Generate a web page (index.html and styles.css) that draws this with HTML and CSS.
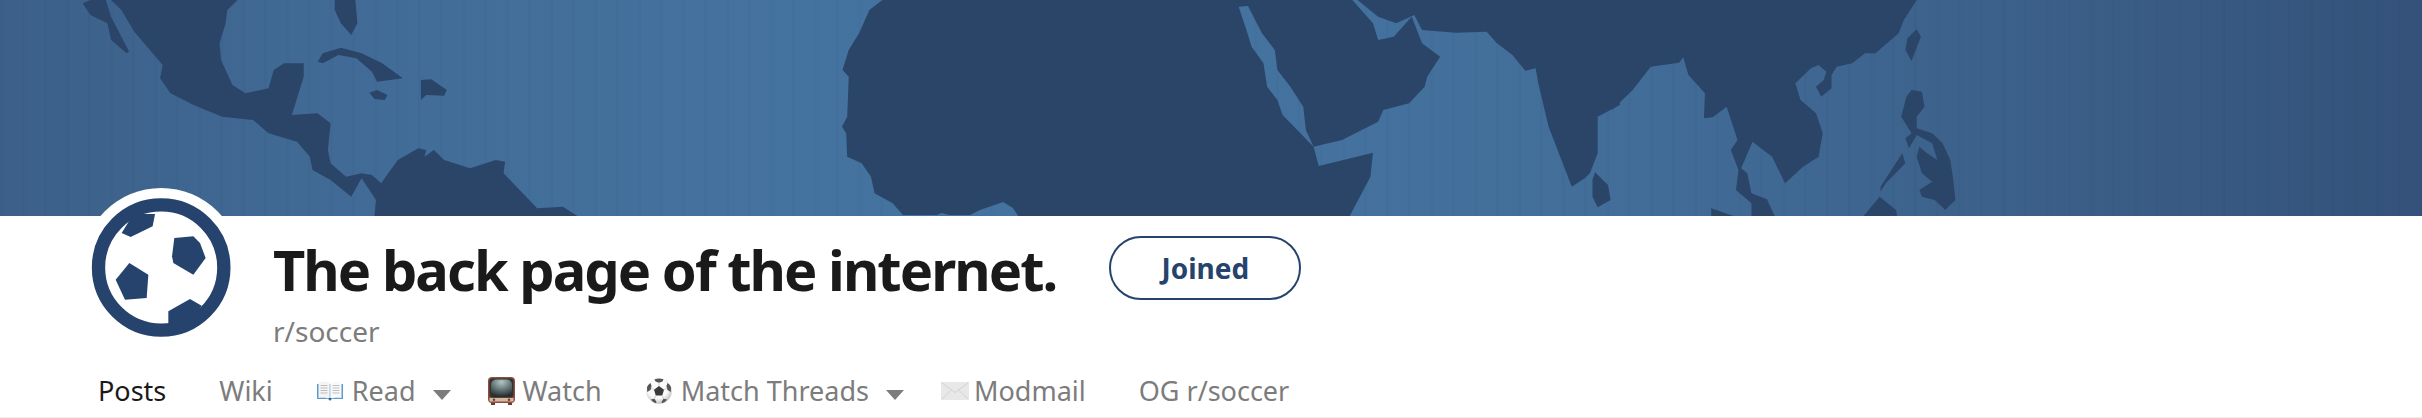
FILE: index.html
```html
<!DOCTYPE html>
<html lang="en">
<head>
    <meta charset="UTF-8">
    <title>r/soccer</title>
    <link rel="stylesheet" href="styles.css">
</head>
<body>
    <!-- banner map, traced in three pieces -->
    <div class="banner">
        <svg class="banner-map" viewBox="0 0 2422 216" width="2422" height="216">
            <g class="land" transform="scale(0.5165 0.3333)">
                <polygon points="160,10 175,0 205,0 215,50 235,110 250,155 245,160 215,120 208,70 175,45"/>
                <polygon points="215,0 460,0 440,30 437,70 425,130 428,180 450,255 475,280 520,265 530,210 550,190 588,190 588,230 565,345 615,340 640,370 635,450 640,490 670,530 700,520 720,525 738,550 770,480 810,445 825,450 822,470 840,450 860,480 910,505 960,480 978,485 975,520 1000,560 1040,625 1090,620 1118,648 725,648 728,600 700,535 680,590 640,540 605,510 600,470 575,425 520,400 490,360 430,350 375,315 330,280 310,235 315,195 260,95 235,30"/>
                <polygon points="648,0 688,0 692,70 680,105 660,70 648,30"/>
                <polygon points="615,185 625,160 660,143 700,160 740,190 780,235 730,245 720,215 690,175 655,165 625,190"/>
                <polygon points="715,278 730,270 750,285 745,300 725,297"/>
                <polygon points="815,240 835,238 865,270 860,287 825,285 815,300"/>
            </g>
            <g class="land" transform="translate(810 0) scale(0.5165 0.3333)">
                <polygon points="140,0 115,30 95,100 75,150 63,210 75,230 72,350 62,380 70,400 72,470 100,490 118,530 125,580 160,610 180,645 245,645 255,639 270,645 310,645 329,630 374,606 393,624 403,648 1045,648 1085,530 1090,458 985,498 975,440 940,385 915,345 905,300 885,260 878,190 855,140 845,90 830,20 848,18 875,100 900,150 905,210 930,260 955,320 960,390 975,440 1030,420 1100,365 1110,330 1160,310 1190,260 1195,230 1220,170 1185,130 1165,50 1130,110 1100,120 1090,70 1050,0"/>
                <polygon points="1060,0 1100,50 1135,70 1170,45 1185,90 1250,98 1310,95 1330,130 1360,165 1385,212 1405,205 1410,250 1430,380 1475,560 1500,535 1510,520 1525,460 1525,350 1568,315 1568,0"/>
                <polygon points="1520,517 1545,555 1550,600 1525,622 1515,590 1515,540"/>
            </g>
            <g class="land" transform="translate(1612 0) scale(0.5165 0.3333)">
                <polygon points="0,0 0,330 40,270 75,200 130,188 138,172 148,225 180,280 178,355 195,352 222,320 243,420 230,450 245,510 240,570 270,610 270,648 315,648 300,598 270,580 262,520 250,505 272,425 310,470 335,550 370,500 400,470 408,400 395,340 365,300 355,250 385,205 400,195 415,215 410,240 395,260 405,290 425,265 425,225 435,200 465,190 490,160 510,160 555,100 565,60 590,0"/>
                <polygon points="192,625 235,648 192,648"/>
                <polygon points="590,88 598,110 580,183 568,150 572,115"/>
                <polygon points="580,270 600,275 605,320 590,350 590,385 620,400 640,430 655,480 660,530 665,600 645,630 625,600 600,590 595,570 620,545 600,520 590,470 595,440 610,460 630,480 620,430 590,405 575,445 568,415 580,400 560,350 570,290"/>
                <polygon points="562,460 568,490 530,550 520,575 520,560"/>
                <polygon points="518,590 550,630 552,648 487,648"/>
            </g>
        </svg>
    </div>

    <div class="head">
        <div class="avatar">
            <svg viewBox="63 25 480 480" width="160" height="160">
                <circle cx="303.5" cy="265" r="240" fill="#fff"/>
                <circle class="ring" cx="303.5" cy="263.5" r="188"/>
                <polygon class="patch" points="185,160 205,128 225,103 285,103 278,140 212,172"/>
                <polygon class="patch" points="343,175 400,170 420,190 437,235 400,285 340,250 336,230"/>
                <polygon class="patch" points="208,250 265,285 260,355 195,360 167,300"/>
                <polygon class="patch" points="325,395 390,358 425,378 412,397 432,385 400,435 325,445"/>
            </svg>
        </div>
        <div class="titles">
            <h1>The back page of the internet.</h1>
            <div class="subname">r/soccer</div>
        </div>
        <button class="join">Joined</button>
    </div>

    <nav class="tabs">
        <a class="tab active">Posts</a>
        <a class="tab">Wiki</a>
        <a class="tab">
            <svg class="emoji" viewBox="0 0 26 20" width="26" height="20">
                <path d="M0 3 H26 V18 H15 L13 20 L11 18 H0 Z" fill="#5b9ccf"/>
                <path d="M1.5 1.5 C5 0 10 0 12.7 2 V18 C10 16.5 5 16.5 1.5 17 Z" fill="#f4f4f4"/>
                <path d="M24.5 1.5 C21 0 16 0 13.3 2 V18 C16 16.5 21 16.5 24.5 17 Z" fill="#fafafa"/>
                <path d="M3.5 4.5 H10.5 M3.5 7 H10.5 M3.5 9.5 H10.5 M3.5 12 H10.5 M15.5 4.5 H22.5 M15.5 7 H22.5 M15.5 9.5 H22.5 M15.5 12 H22.5" stroke="#bdbdbd" stroke-width="1"/>
                <path d="M11 17 L13 19 L15 17 Z" fill="#33557a"/>
            </svg>
            Read
        </a>
        <span class="caret"></span>
        <a class="tab tab-tight">
            <svg class="emoji" viewBox="0 0 27 28" width="27" height="28">
                <defs>
                    <radialGradient id="tvscreen" cx="0.5" cy="0.15" r="0.9">
                        <stop offset="0" stop-color="#b3c6c6"/>
                        <stop offset="0.55" stop-color="#5e6f70"/>
                        <stop offset="1" stop-color="#1f2425"/>
                    </radialGradient>
                </defs>
                <rect x="0" y="0" width="27" height="26" rx="4" fill="#8a4f3c"/>
                <rect x="1.5" y="1.5" width="24" height="19" rx="3" fill="#2e3233"/>
                <rect x="3" y="2.5" width="21" height="17" rx="5" fill="url(#tvscreen)"/>
                <rect x="1.5" y="21" width="24" height="3.5" fill="#d4b8a4"/>
                <circle cx="6" cy="22.7" r="1.2" fill="#6b3b2c"/>
                <circle cx="21" cy="22.7" r="1.2" fill="#6b3b2c"/>
                <path d="M3 26 H7 V28 H3 Z M20 26 H24 V28 H20 Z" fill="#6b3b2c"/>
            </svg>
            Watch
        </a>
        <a class="tab">
            <svg class="emoji" viewBox="0 0 26 26" width="26" height="26">
                <defs>
                    <radialGradient id="ballshade" cx="0.45" cy="0.4" r="0.65">
                        <stop offset="0.6" stop-color="#fafafa"/>
                        <stop offset="1" stop-color="#b4b4b4"/>
                    </radialGradient>
                </defs>
                <circle cx="13" cy="13" r="12.8" fill="url(#ballshade)"/>
                <polygon points="13,8 18,11.7 16.2,17.5 9.8,17.5 8,11.7" fill="#3a3a3a"/>
                <path d="M8.5 1.2 Q13 -.2 17.5 1.2 L16.5 3.5 L13 4.8 L9.5 3.5 Z M1 9 Q2.2 6.5 4.5 5 L5.6 8 L4.5 12 L1.2 14 Z M25 9 Q23.8 6.5 21.5 5 L20.4 8 L21.5 12 L24.8 14 Z M4.8 21.5 L8.5 20.8 L10.5 24 L10 25.3 Q6.8 24.4 4.8 21.5 Z M21.2 21.5 L17.5 20.8 L15.5 24 L16 25.3 Q19.2 24.4 21.2 21.5 Z" fill="#555"/>
                <path d="M13 4.8 V8 M8 11.7 L4.8 10 M18 11.7 L21.2 10 M9.8 17.5 L8.3 20.8 M16.2 17.5 L17.7 20.8" stroke="#bbb" stroke-width=".7"/>
            </svg>
            Match Threads
        </a>
        <span class="caret"></span>
        <a class="tab tab-mail">
            <svg class="emoji" viewBox="0 0 28 18" width="28" height="18">
                <rect width="28" height="18" rx="1" fill="#e8e8e8"/>
                <path d="M.5 .5 L14 10.5 L27.5 .5 M.5 17.5 L10.5 8 M27.5 17.5 L17.5 8" fill="none" stroke="#d2d2d2" stroke-width="1"/>
            </svg>
            Modmail
        </a>
        <a class="tab tab-last">OG r/soccer</a>
    </nav>
</body>
</html>
```
FILE: styles.css
```css
body {
    margin: 0;
    background-color: #fff;
    font-family: "Noto Sans", "Liberation Sans", sans-serif;
    overflow: hidden;
}
.banner {
    height: 216px;
    background:
        repeating-linear-gradient(90deg, rgba(0, 0, 0, 0.015) 0 3px, rgba(255, 255, 255, 0.005) 3px 22px),
        linear-gradient(90deg, #3b5f89 0, #416c98 400px, #44729f 800px, #44729f 1250px, #416d99 1620px, #3b608a 2000px, #33517a 2422px);
}
.banner-map {
    display: block;
}
.land {
    fill: #2b4569;
}
.head {
    display: flex;
    align-items: flex-start;
    padding-left: 81px;
    height: 132px;
}
.avatar {
    width: 160px;
    height: 160px;
    margin-top: -28px;
}
.avatar svg {
    display: block;
}
.ring {
    fill: none;
    stroke: #26436d;
    stroke-width: 40;
}
.patch {
    fill: #26436d;
}
.titles {
    margin-left: 32px;
}
h1 {
    margin: 17px 0 0;
    font-size: 56px;
    line-height: 72px;
    font-weight: 700;
    letter-spacing: -1.95px;
    color: #1a1a1b;
}
.subname {
    margin-top: 8px;
    font-size: 28px;
    line-height: 36px;
    color: #7c7c7c;
}
.join {
    width: 192px;
    height: 64px;
    margin: 20px 0 0 53px;
    background-color: #fff;
    border: 2px solid #26436d;
    border-radius: 32px;
    font-family: inherit;
    font-size: 28px;
    font-weight: 700;
    color: #26436d;
    padding: 0;
}
.tabs {
    display: flex;
    align-items: center;
    gap: 44px;
    padding: 16px 0 0 98px;
    height: 53px;
    border-bottom: 1px solid #edeff1;
    font-size: 27px;
    color: #7c7c7c;
}
.tab {
    display: flex;
    align-items: center;
    gap: 9px;
}
.tab-tight {
    gap: 8px;
}
.tab-mail {
    gap: 5px;
}
.active {
    color: #1a1a1b;
    margin-right: 9px;
}
.tab-last {
    margin-left: 9px;
}
.caret {
    width: 0;
    height: 0;
    margin: 8px -7px 0 -27px;
    border-left: 9px solid transparent;
    border-right: 9px solid transparent;
    border-top: 10px solid #7c7c7c;
}
```
